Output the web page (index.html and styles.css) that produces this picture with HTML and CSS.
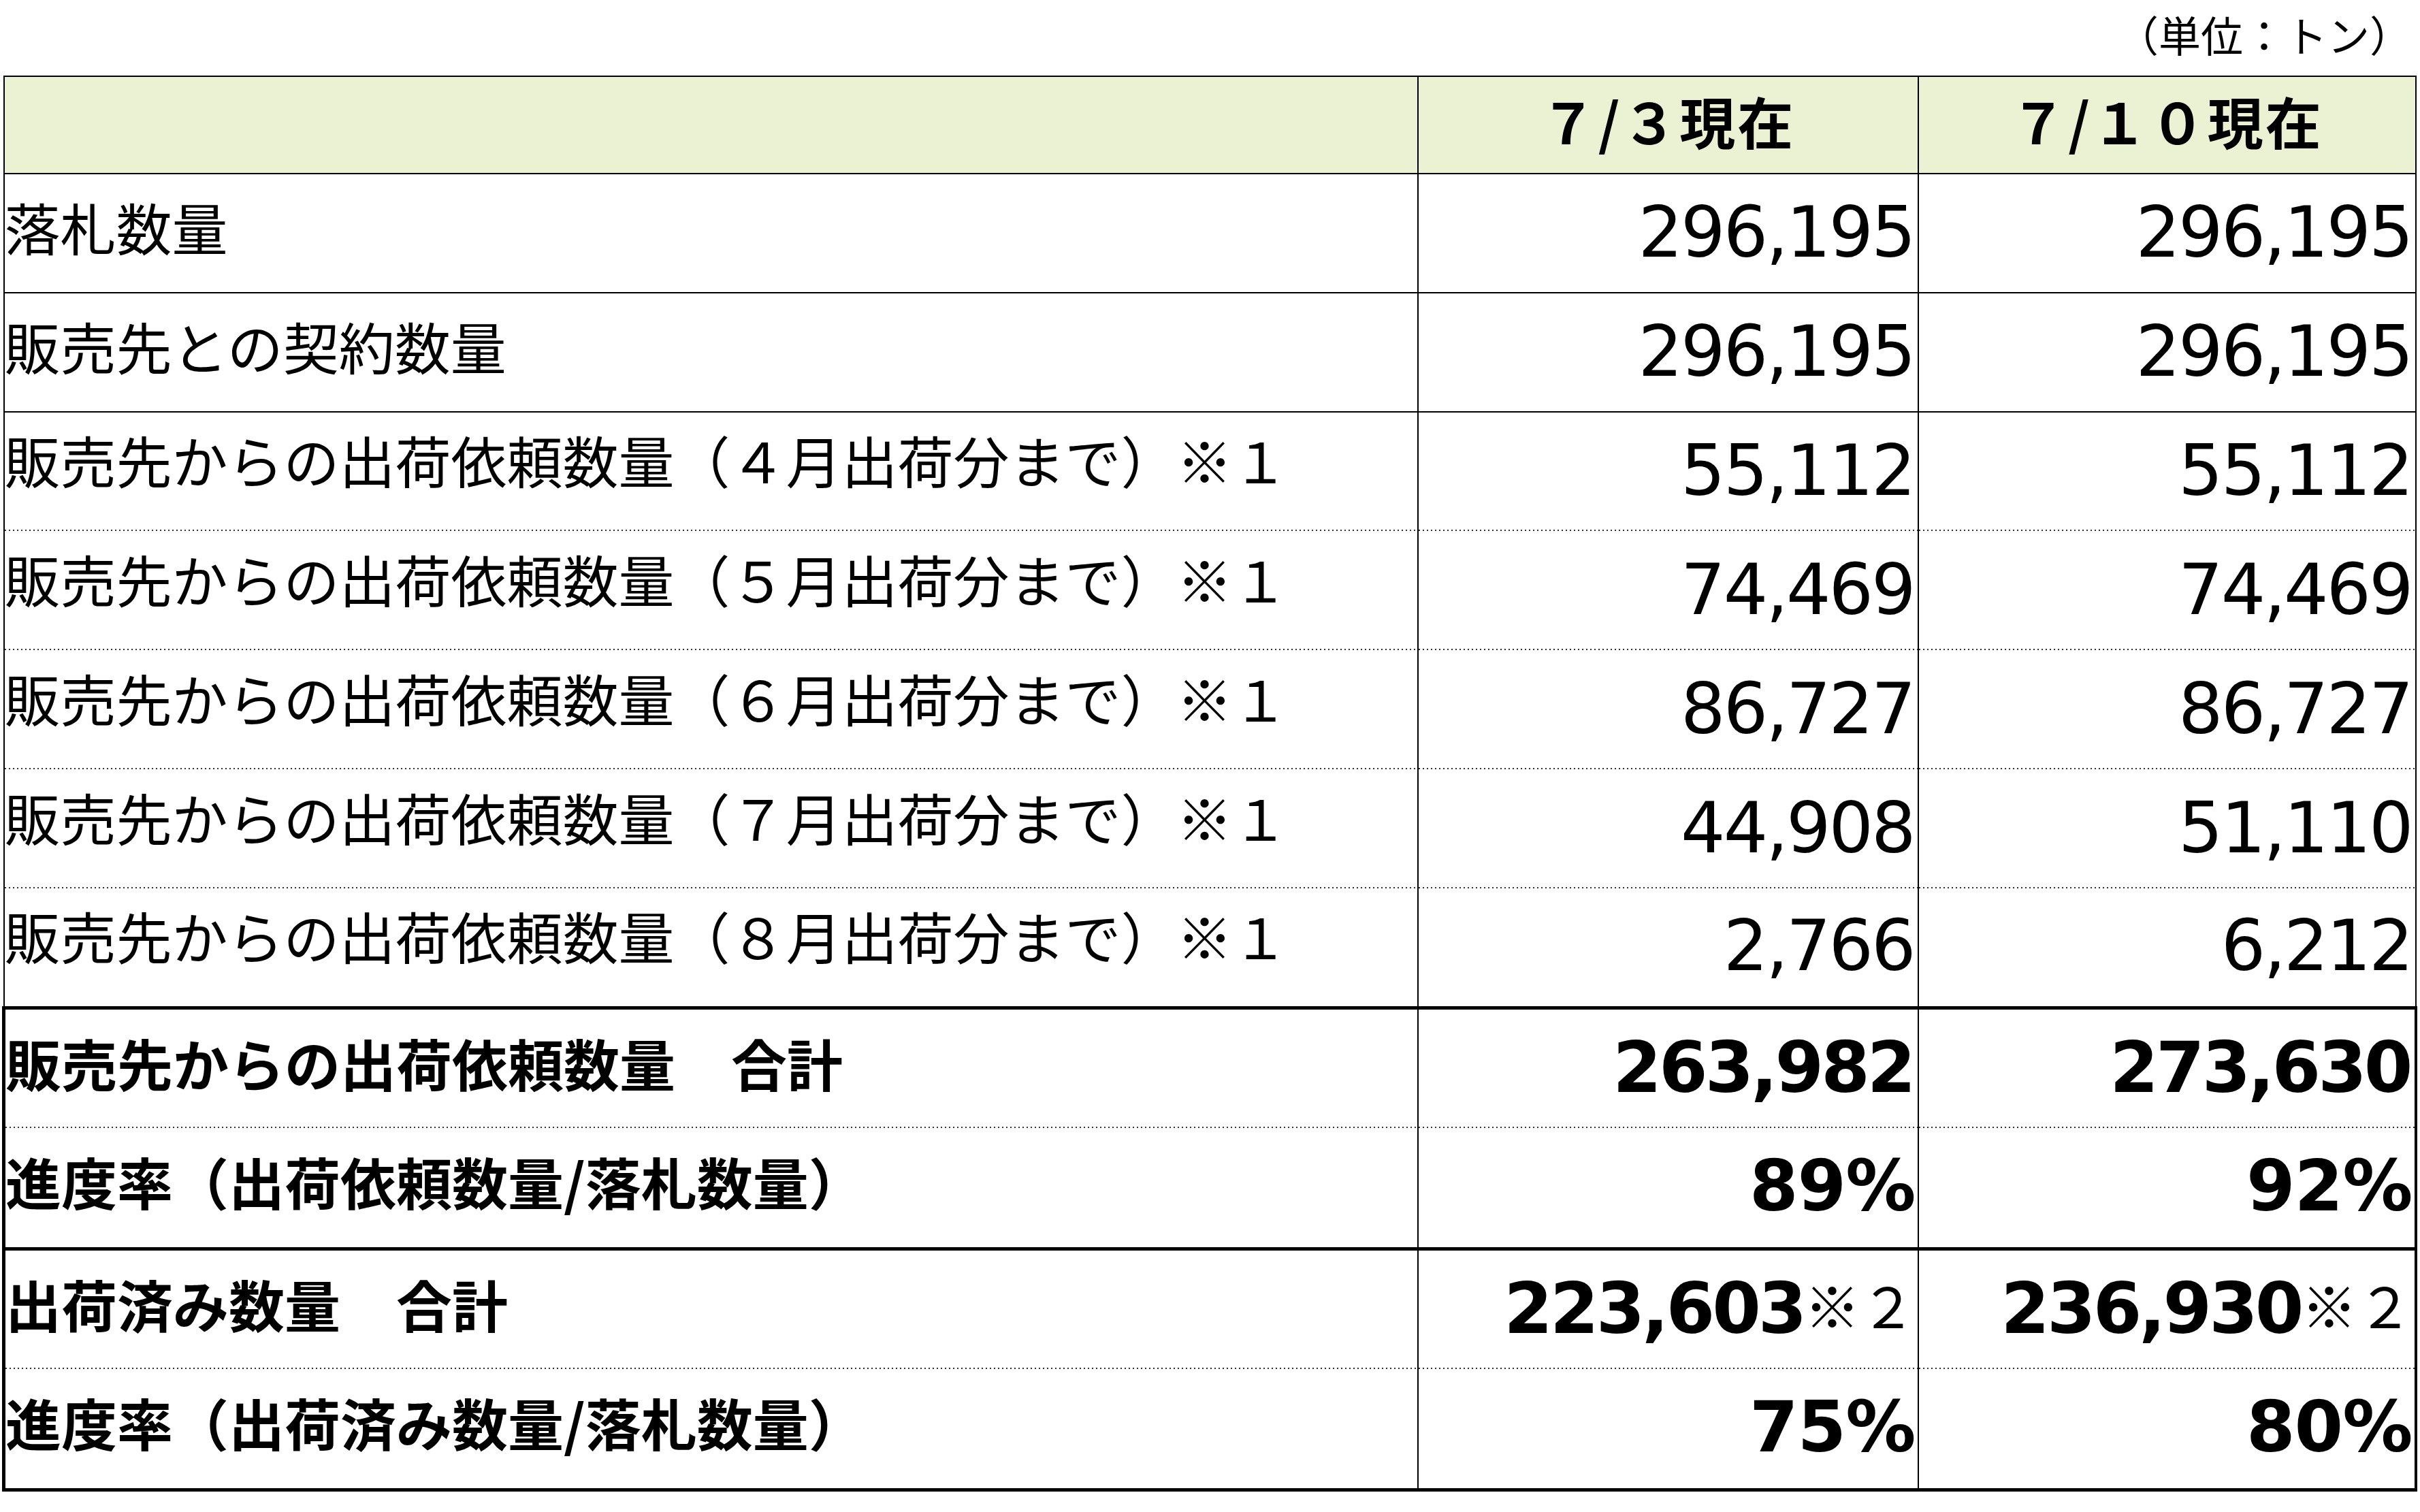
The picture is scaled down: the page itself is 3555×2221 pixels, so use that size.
FILE: index.html
```html
<!DOCTYPE html>
<html lang="ja">
<head>
<meta charset="utf-8">
<title>出荷状況</title>
<link rel="stylesheet" href="styles.css">
</head>
<body>
<div class="page">
  <div class="unit">（単位：トン）</div>
  <table class="sheet">
    <colgroup>
      <col class="c-label">
      <col class="c-val">
      <col class="c-val2">
    </colgroup>
    <thead>
      <tr class="head"><th></th><th>７/３現在</th><th>７/１０現在</th></tr>
    </thead>
    <tbody>
      <tr class="r solid"><td class="lbl">落札数量</td><td class="num">296,195</td><td class="num">296,195</td></tr>
      <tr class="r solid"><td class="lbl">販売先との契約数量</td><td class="num">296,195</td><td class="num">296,195</td></tr>
      <tr class="r dot"><td class="lbl hi">販売先からの出荷依頼数量（４月出荷分まで）※１</td><td class="num">55,112</td><td class="num">55,112</td></tr>
      <tr class="r dot"><td class="lbl hi">販売先からの出荷依頼数量（５月出荷分まで）※１</td><td class="num">74,469</td><td class="num">74,469</td></tr>
      <tr class="r dot"><td class="lbl hi">販売先からの出荷依頼数量（６月出荷分まで）※１</td><td class="num">86,727</td><td class="num">86,727</td></tr>
      <tr class="r dot"><td class="lbl hi">販売先からの出荷依頼数量（７月出荷分まで）※１</td><td class="num">44,908</td><td class="num">51,110</td></tr>
      <tr class="r"><td class="lbl hi">販売先からの出荷依頼数量（８月出荷分まで）※１</td><td class="num">2,766</td><td class="num">6,212</td></tr>
      <tr class="g gtop dot"><td class="lbl b">販売先からの出荷依頼数量　合計</td><td class="num b">263,982</td><td class="num b">273,630</td></tr>
      <tr class="g"><td class="lbl b">進度率（出荷依頼数量/落札数量）</td><td class="num b pct">89%</td><td class="num b pct">92%</td></tr>
      <tr class="g gtop dot"><td class="lbl b">出荷済み数量　合計</td><td class="num b">223,603<span class="note">※２</span></td><td class="num b">236,930<span class="note">※２</span></td></tr>
      <tr class="g glast"><td class="lbl b">進度率（出荷済み数量/落札数量）</td><td class="num b pct">75%</td><td class="num b pct">80%</td></tr>
    </tbody>
  </table>
</div>
</body>
</html>
```

FILE: styles.css
```css
* { box-sizing: border-box; }
html, body { margin: 0; padding: 0; background: #ffffff; }
body { font-family: "Noto Sans CJK JP", sans-serif; color: #000; }

.page { width: 3555px; padding-left: 3px; }

.unit {
  height: 111px;
  display: flex;
  align-items: center;
  justify-content: flex-end;
  padding-right: 12px;
  padding-bottom: 11px;
  font-size: 62px;
  line-height: 1;
}

.sheet {
  border-collapse: collapse;
  table-layout: fixed;
  width: 3543px;
}
.c-label { width: 2077px; }
.c-val { width: 735px; }
.c-val2 { width: 731px; }

.sheet th, .sheet td {
  padding: 0;
  border-left: 2px solid #000;
  border-right: 2px solid #000;
  white-space: nowrap;
  overflow: hidden;
  line-height: 1.2;
  vertical-align: middle;
}

.head th {
  height: 143px;
  background: #ebf1d3;
  border-top: 2px solid #000;
  border-bottom: 2px solid #000;
  font-weight: 700;
  font-size: 82px;
  letter-spacing: 3px;
  text-align: center;
  padding-bottom: 13px;
}

.r td { height: 175px; }
.g td { height: 177px; }

.solid td { border-bottom: 2px solid #000; }
.dot td {
  background: repeating-linear-gradient(90deg, #333 0 2px, transparent 2px 6px) left bottom / 100% 2px no-repeat;
}

.gtop td { border-top: 5px solid #000; }
.glast td { border-bottom: 5px solid #000; }
.g td:first-child { border-left: 5px solid #000; }
.g td:last-child { border-right: 4px solid #000; }

.lbl {
  font-size: 82px;
  text-align: left;
  padding-bottom: 18px !important;
}
.lbl.hi { padding-bottom: 35px !important; }

.num {
  font-family: "DejaVu Sans", "Noto Sans CJK JP", sans-serif;
  font-size: 103px;
  letter-spacing: -3px;
  text-align: right;
  padding-right: 5px !important;
  padding-bottom: 2px !important;
}

.num.b { font-weight: 700; letter-spacing: -4px; padding-right: 6px !important; }
.num.b.pct { letter-spacing: -1px; padding-right: 3px !important; }
.lbl.b { font-weight: 700; }

.note {
  font-family: "Noto Sans CJK JP", sans-serif;
  font-size: 82px;
  font-weight: 400;
  letter-spacing: 0;
  vertical-align: 7px;
  margin-right: -4px;
}
```
